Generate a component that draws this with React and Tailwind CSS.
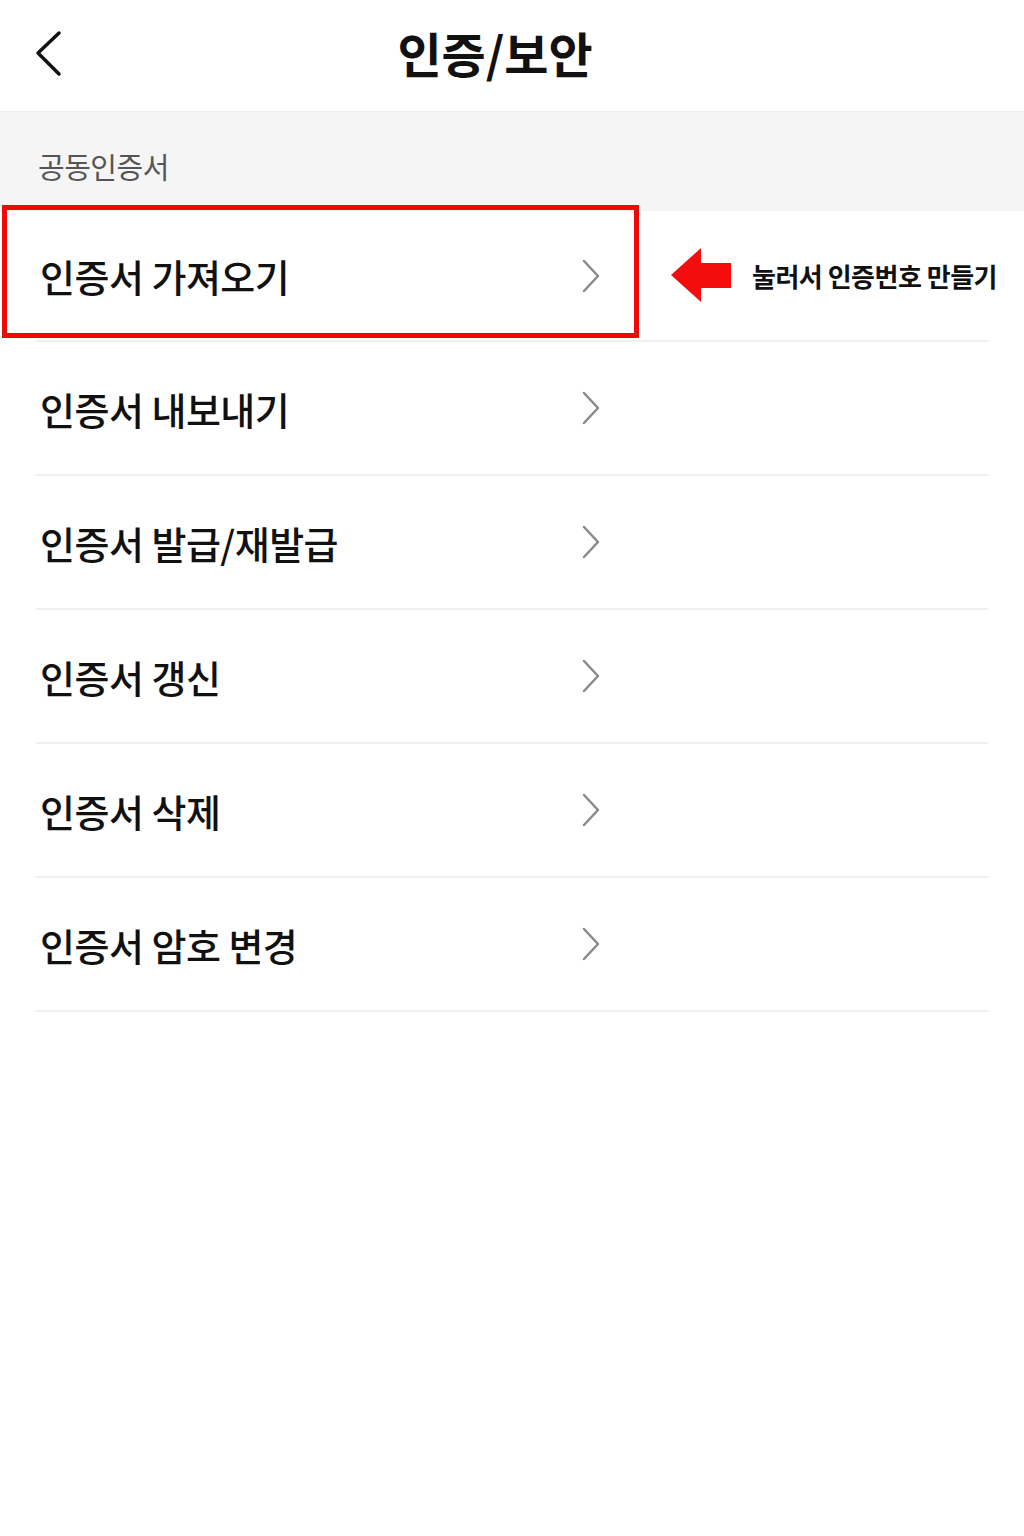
import React from 'react';

const MENU = [
  '인증서 가져오기',
  '인증서 내보내기',
  '인증서 발급/재발급',
  '인증서 갱신',
  '인증서 삭제',
  '인증서 암호 변경',
];

const FONT = { fontFamily: '"Noto Sans CJK KR", "Noto Sans", sans-serif' };

function Chevron() {
  return (
    <svg width="18" height="34" viewBox="0 0 18 34" fill="none">
      <path d="M2 2 L16 17 L2 32" stroke="#8a8a8a" strokeWidth="2.5" strokeLinecap="round" strokeLinejoin="round" />
    </svg>
  );
}

export default function App() {
  return (
    <div className="min-h-screen bg-white text-[#111]" style={FONT}>
      <header className="relative h-[112px] flex items-center justify-center border-b border-[#ececec]">
        <button className="absolute left-[34px] top-[30px]">
          <svg width="30" height="48" viewBox="0 0 30 48" fill="none">
            <path d="M25 3 L4 23 L25 44" stroke="#111" strokeWidth="3.5" strokeLinecap="round" strokeLinejoin="round" />
          </svg>
        </button>
        <h1 className="text-[48px] font-bold tracking-[0px] leading-none -mt-[8px] -ml-[34px]">인증/보안</h1>
      </header>

      <div className="bg-[#f5f5f5] h-[99px] flex items-center px-[38px]">
        <p className="text-[29px] text-[#555] tracking-[-0.5px] mt-[10px]">공동인증서</p>
      </div>

      <div className="relative">
        <ul className="pl-[36px] pr-[36px]">
          {MENU.map((m, i) => (
            <li
              key={m}
              className={`flex items-center border-b-2 border-[#efefef] ${i === 0 ? 'h-[131px]' : 'h-[134px]'}`}
            >
              <span className="w-[546px] pl-[4px] text-[38px] font-medium tracking-[-0.5px]">{m}</span>
              <Chevron />
            </li>
          ))}
        </ul>

        <div className="absolute left-[2px] top-[-6px] w-[637px] h-[133px] border-[5px] border-[#ee0a0a]" />

        <div className="absolute left-[670px] top-[36px] flex items-center gap-[20px]">
          <svg width="62" height="56" viewBox="0 0 62 56">
            <polygon points="1,28 31,1 31,16 61,16 61,41 31,41 31,55" fill="#f50d0d" />
          </svg>
          <span className="text-[26px] font-bold tracking-[-0.5px] text-[#111]">눌러서 인증번호 만들기</span>
        </div>
      </div>
    </div>
  );
}
